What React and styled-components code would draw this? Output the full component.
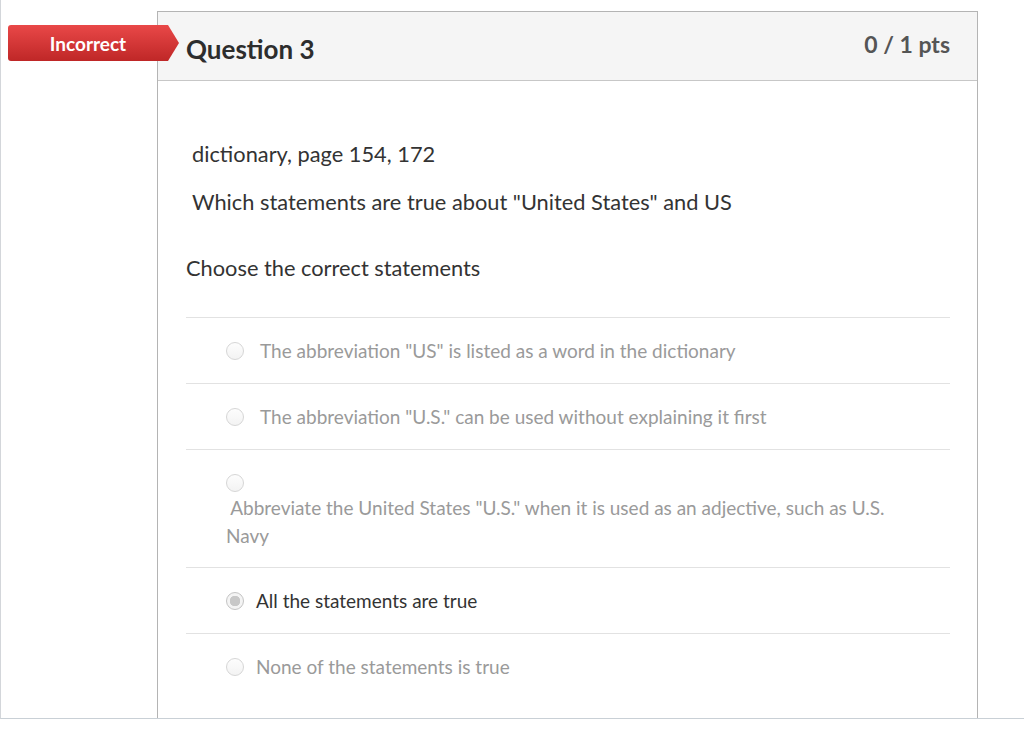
import styled, { createGlobalStyle } from "styled-components";

const GlobalStyle = createGlobalStyle`
  body {
    margin: 0;
    background: #fff;
    font-family: Lato, "Open Sans", Arial, sans-serif;
    color: #333;
  }
`;

const Frame = styled.div`
  box-sizing: border-box;
  height: 719px;
  padding: 11px 0 0 156px;
  border-left: 1px solid #d3d6da;
  border-bottom: 1px solid #c9d0d6;
  overflow: hidden;
`;

const Card = styled.section`
  position: relative;
  box-sizing: border-box;
  width: 821px;
  height: 100%;
  border: 1px solid #b4b4b4;
  border-bottom: none;
`;

const Badge = styled.div`
  position: absolute;
  left: -150px;
  top: 13px;
  box-sizing: border-box;
  width: 171px;
  height: 36px;
  padding-right: 11px;
  display: flex;
  align-items: center;
  justify-content: center;
  color: #fff;
  font-size: 19px;
  font-weight: 700;
  border-radius: 3px 0 0 3px;
  background: linear-gradient(#e94848, #bf2727);
  clip-path: polygon(0 0, 160px 0, 171px 50%, 160px 100%, 0 100%);
  z-index: 2;
`;

const Header = styled.header`
  box-sizing: border-box;
  height: 69px;
  display: flex;
  justify-content: space-between;
  align-items: flex-start;
  padding: 0 27px 0 28px;
  background: #f5f5f5;
  border-bottom: 1px solid #c7c7c7;
`;

const Title = styled.h2`
  margin: 0;
  padding-top: 21px;
  font-size: 26px;
  font-weight: 700;
  color: #2d2d2d;
`;

const Points = styled.div`
  padding-top: 18px;
  font-size: 23px;
  font-weight: 700;
  color: #555;
`;

const Body = styled.div`
  padding: 59px 27px 0 28px;
`;

const QuestionText = styled.p`
  margin: 0 0 ${(p) => p.$gap}px;
  padding-left: 6px;
  font-size: 21.8px;
  line-height: 28px;
  color: #333;
`;

const Prompt = styled.p`
  margin: 0 0 35px;
  font-size: 21.8px;
  line-height: 28px;
  color: #333;
`;

const Answers = styled.ul`
  list-style: none;
  margin: 0;
  padding: 0;
`;

const Answer = styled.li`
  box-sizing: border-box;
  display: flex;
  flex-direction: ${(p) => (p.$stacked ? "column" : "row")};
  align-items: ${(p) => (p.$stacked ? "flex-start" : "center")};
  min-height: 66px;
  padding: ${(p) => (p.$stacked ? "24px 40px 17px 40px" : "0 40px")};
  border-top: 1px solid #e2e2e2;
  font-size: 19px;
  line-height: 28px;
  color: ${(p) => (p.$selected ? "#333" : "#9a9a9a")};
`;

const Radio = styled.span`
  flex: none;
  box-sizing: border-box;
  width: 18px;
  height: 18px;
  margin-right: ${(p) => p.$gap}px;
  margin-bottom: ${(p) => (p.$stacked ? 2 : 0)}px;
  border-radius: 50%;
  border: 1px solid ${(p) => (p.$checked ? "#c4c4c4" : "#d6d6d6")};
  background: ${(p) =>
    p.$checked
      ? "radial-gradient(circle, #c8c8c8 0 5px, #f4f4f4 5.5px)"
      : "linear-gradient(#fdfdfd, #f3f3f3)"};
`;

const answers = [
  { text: 'The abbreviation "US" is listed as a word in the dictionary' },
  { text: 'The abbreviation "U.S." can be used without explaining it first' },
  {
    text: '\u00a0Abbreviate the United States "U.S." when it is used as an adjective, such as U.S. Navy',
    stacked: true,
  },
  { text: "All the statements are true", selected: true },
  { text: "None of the statements is true", narrow: true },
];

export default function App() {
  return (
    <>
      <GlobalStyle />
      <Frame>
        <Card>
          <Badge>Incorrect</Badge>
          <Header>
            <Title>Question 3</Title>
            <Points>0 / 1 pts</Points>
          </Header>
          <Body>
            <QuestionText $gap={20}>dictionary, page 154, 172</QuestionText>
            <QuestionText $gap={38}>
              Which statements are true about "United States" and US
            </QuestionText>
            <Prompt>Choose the correct statements</Prompt>
            <Answers>
              {answers.map((a) => (
                <Answer key={a.text} $stacked={a.stacked} $selected={a.selected}>
                  <Radio
                    $checked={a.selected}
                    $stacked={a.stacked}
                    $gap={a.stacked ? 0 : a.selected || a.narrow ? 12 : 16}
                  />
                  <span>{a.text}</span>
                </Answer>
              ))}
            </Answers>
          </Body>
        </Card>
      </Frame>
    </>
  );
}
